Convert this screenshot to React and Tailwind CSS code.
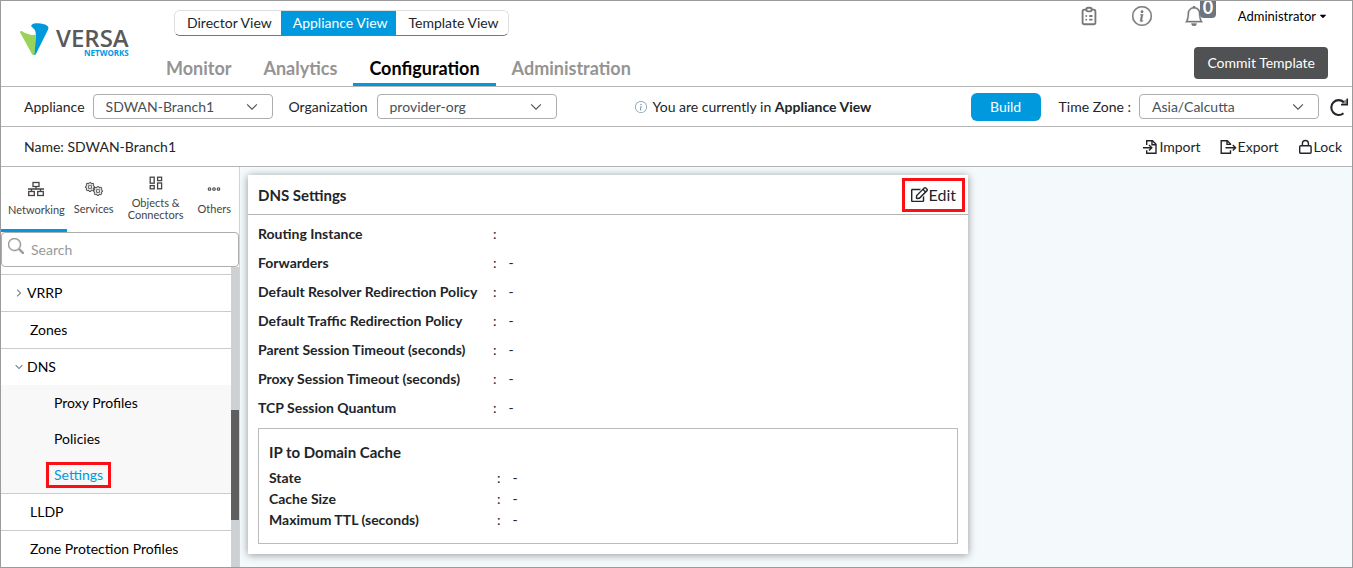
import { useState } from 'react';
import { BsBell, BsInfoCircle, BsGear, BsSearch, BsChevronDown, BsChevronRight } from 'react-icons/bs';
import { FaRegEdit, FaCaretDown } from 'react-icons/fa';
import { TbClipboardList } from 'react-icons/tb';

const views = ['Director View', 'Appliance View', 'Template View'];
const pages = ['Monitor', 'Analytics', 'Configuration', 'Administration'];

const settings = [
  { label: 'Routing Instance', value: '' },
  { label: 'Forwarders', value: '-' },
  { label: 'Default Resolver Redirection Policy', value: '-' },
  { label: 'Default Traffic Redirection Policy', value: '-' },
  { label: 'Parent Session Timeout (seconds)', value: '-' },
  { label: 'Proxy Session Timeout (seconds)', value: '-' },
  { label: 'TCP Session Quantum', value: '-' },
];

const cache = [
  { label: 'State', value: '-' },
  { label: 'Cache Size', value: '-' },
  { label: 'Maximum TTL (seconds)', value: '-' },
];

function NetworkIcon() {
  return (
    <svg width="18" height="16" viewBox="0 0 18 16" fill="none" stroke="currentColor" strokeWidth="1.3">
      <rect x="6" y="1.5" width="6" height="4" />
      <path d="M9 5.5V8M1 8h16M4.5 8v2.5M13.5 8v2.5" />
      <rect x="1.7" y="10.5" width="5.6" height="4" />
      <rect x="10.7" y="10.5" width="5.6" height="4" />
    </svg>
  );
}

function GearsIcon() {
  return (
    <span className="flex">
      <BsGear size={10} className="-mr-0.5 stroke-[0.5]" />
      <BsGear size={10} className="mt-1 stroke-[0.5]" />
    </span>
  );
}

function BlocksIcon() {
  return (
    <svg width="14" height="14" viewBox="0 0 14 14" fill="none" stroke="currentColor" strokeWidth="1.3">
      <rect x="1.2" y="1.2" width="4" height="6" />
      <rect x="8.6" y="1.2" width="4" height="3.4" />
      <rect x="1.2" y="9.6" width="4" height="3.2" />
      <rect x="8.6" y="7" width="4" height="5.8" />
    </svg>
  );
}

function DotsIcon() {
  return (
    <svg width="14" height="14" viewBox="0 0 14 14" fill="none" stroke="currentColor" strokeWidth="1.1">
      <circle cx="2.5" cy="7" r="1.3" />
      <circle cx="7" cy="7" r="1.3" />
      <circle cx="11.5" cy="7" r="1.3" />
    </svg>
  );
}

function ReloadIcon() {
  return (
    <svg width="20" height="20" viewBox="0 0 20 20" fill="none" stroke="currentColor" strokeWidth="2.1">
      <path d="M14.500 16.200A7.400 7.400 0 1 1 14.800 5.200" />
      <path d="M18.300 1.500v6.300h-6.300" strokeWidth="1.500" />
      <path d="M12 7.500l2-3.500L18.500 2v5.500z" fill="currentColor" fillOpacity="0.5" stroke="none" />
    </svg>
  );
}

function ImportIcon() {
  return (
    <svg width="16" height="16" viewBox="0 0 16 16" fill="none" stroke="currentColor" strokeWidth="1.4">
      <path d="M4.700 6V1.700h5.800l3.500 3.500v9.100H4.700v-3" />
      <path d="M10 1.700v4h4" />
      <path d="M1 8.700h8.500M7 5.900l2.800 2.800L7 11.500" />
    </svg>
  );
}

function ExportIcon() {
  return (
    <svg width="17" height="16" viewBox="0 0 17 16" fill="none" stroke="currentColor" strokeWidth="1.4">
      <path d="M10.500 6V5L7.300 1.700H1.200v12.600h9.300v-3" />
      <path d="M7 1.700v3.700h3.500" />
      <path d="M5.500 8.700h10M12.800 5.900l2.800 2.800-2.800 2.800" />
    </svg>
  );
}

function LockIcon() {
  return (
    <svg width="15" height="16" viewBox="0 0 15 16" fill="none" stroke="currentColor" strokeWidth="1.4">
      <rect x="1.700" y="6.700" width="11.400" height="7.600" rx="1" />
      <path d="M4.400 6.700V4.500a3 3 0 0 1 6 0v2.200" />
    </svg>
  );
}

const groups = [
  { label: 'Networking', icon: <NetworkIcon /> },
  { label: 'Services', icon: <GearsIcon /> },
  { label: 'Objects & Connectors', icon: <BlocksIcon /> },
  { label: 'Others', icon: <DotsIcon /> },
];

function Logo() {
  return (
    <a href="#" aria-label="Versa Networks" className="flex gap-[7px]">
      <svg width="29" height="33" viewBox="0 0 29 33" className="shrink-0">
        <path d="M.2 9.800C-.2 8.500.8 7.700 2 8.300c4 2.500 8.500 4.200 13.500 3.500L15 31.500c-.8 1-2.200 1-2.900-.2z" fill="#9bd35a" />
        <path d="M11.800 1.800C14-.4 24-.2 27.500 3c1.200 1.200 1 2.500.5 3.700L16.200 30.500c-.4.900-.9 1.500-1.700 1.700L15.800 12c.2-4.500-1.500-6-3.700-7.700-1-.8-1.100-1.700-.3-2.500z" fill="#0099de" />
      </svg>
      <span className="flex flex-col items-end pt-1 font-['Open_Sans',sans-serif]">
        <span className="text-2xl font-semibold leading-[22px] text-[#58595b]">VERSA</span>
        <span className="text-[8px] font-bold leading-2 text-[#0099de]">NETWORKS</span>
      </span>
    </a>
  );
}

function Select({ id, value }) {
  return (
    <div className="relative">
      <select
        id={id}
        defaultValue={value}
        className="block h-[25px] w-[180px] appearance-none rounded border border-[#adadad] bg-white pl-3 pr-8 text-sm leading-5 text-[#495057]"
      >
        <option>{value}</option>
      </select>
      <BsChevronDown size={12} className="pointer-events-none absolute right-[15px] top-[7px] stroke-[0.5] text-[#343a40]" />
    </div>
  );
}

function Action({ icon, children }) {
  return (
    <button type="button" className="flex items-center gap-px">
      {icon}
      {children}
    </button>
  );
}

function Fields({ rows, rowClass }) {
  return (
    <dl>
      {rows.map((row) => (
        <div key={row.label} className={`flex items-center ${rowClass}`}>
          <dt className="font-bold">{row.label}</dt>
          <dd className="flex gap-3">
            <span>:</span>
            <span>{row.value}</span>
          </dd>
        </div>
      ))}
    </dl>
  );
}

function MenuItem({ children, open, parent }) {
  const Chevron = open ? BsChevronDown : BsChevronRight;
  return (
    <li className="border-t border-[#c9cbcd]">
      <a href="#" className={`flex h-9 items-center ${parent ? 'gap-1 pl-3.5' : 'pl-[29px]'}`}>
        {parent && <Chevron size={8} className="stroke-1 text-[#5b7083]" />}
        {children}
      </a>
    </li>
  );
}

export default function App() {
  const [view, setView] = useState('Appliance View');
  const [query, setQuery] = useState('');

  return (
    <div className="flex h-screen flex-col overflow-hidden border border-[#9b9b9b] bg-white font-[Lato,sans-serif] text-sm text-[#212529]">
      <header className="flex shrink-0 justify-between border-b border-[#b5b5b5] pr-6">
        <div className="flex">
          <div className="w-[149px] pl-[19px] pt-[22px]">
            <Logo />
          </div>
          <div className="flex flex-col pt-[9px]">
            <div className="ml-6 flex self-start overflow-hidden rounded-md border border-b-[#777] border-[#ddd]">
              {views.map((name) => (
                <button
                  key={name}
                  type="button"
                  onClick={() => setView(name)}
                  className={`h-6 pl-3 pr-[9px] leading-6 ${name === view ? 'bg-[#0099de] text-white' : 'bg-white'}`}
                >
                  {name}
                </button>
              ))}
            </div>
            <nav className="mt-3 flex">
              {pages.map((name) => (
                <a
                  key={name}
                  href="#"
                  className={`h-[38px] border-b-3 px-4 pt-1.5 text-lg font-bold leading-7 ${
                    name === 'Configuration' ? 'border-[#0099de] text-black' : 'border-transparent text-[#949494]'
                  }`}
                >
                  {name}
                </a>
              ))}
            </nav>
          </div>
        </div>

        <div className="flex flex-col items-end">
          <div className="flex h-[30px] items-center text-[#777]">
            <button type="button" aria-label="Tasks">
              <TbClipboardList size={22} />
            </button>
            <button type="button" aria-label="Information" className="ml-8">
              <BsInfoCircle size={20} className="stroke-[0.3]" />
            </button>
            <button type="button" aria-label="Notifications" className="relative ml-8 mr-6">
              <BsBell size={20} className="stroke-[0.3]" />
              <span className="absolute -top-[5px] left-4 h-[17px] rounded-b bg-[#6c757d] px-[3px] text-lg font-bold leading-3 text-white">0</span>
            </button>
            <button type="button" className="flex items-center gap-0.5 pl-2.5 text-[13px] text-black">
              Administrator
              <FaCaretDown size={10} />
            </button>
          </div>
          <button type="button" className="mt-4 h-8 rounded bg-[#505152] px-[13px] text-white">
            Commit Template
          </button>
        </div>
      </header>

      <div className="flex h-10 shrink-0 items-center border-b border-[#b5b5b5] pl-[23px] pr-[3px]">
        <label htmlFor="appliance" className="pr-2">Appliance</label>
        <Select id="appliance" value="SDWAN-Branch1" />
        <label htmlFor="organization" className="pl-4 pr-[9px]">Organization</label>
        <Select id="organization" value="provider-org" />
        <p className="flex flex-1 items-center gap-1.5 pl-[78px]">
          <BsInfoCircle size={12} className="text-[#7c9aab]" />
          <span>You are currently in <b>Appliance View</b></span>
        </p>
        <button type="button" className="h-7 w-[70px] rounded-md bg-[#0099de] text-white">Build</button>
        <label htmlFor="timezone" className="pl-[18px] pr-2">Time Zone :</label>
        <Select id="timezone" value="Asia/Calcutta" />
        <button type="button" aria-label="Reload" className="ml-2.5">
          <ReloadIcon />
        </button>
      </div>

      <div className="flex h-10 shrink-0 items-center justify-between border-b border-[#b5b5b5] pl-[23px] pr-2.5">
        <span>Name: SDWAN-Branch1</span>
        <div className="flex gap-[19px]">
          <Action icon={<ImportIcon />}>Import</Action>
          <Action icon={<ExportIcon />}>Export</Action>
          <Action icon={<LockIcon />}>Lock</Action>
        </div>
      </div>

      <div className="flex min-h-0 flex-1">
        <aside className="flex w-[239px] shrink-0 flex-col border-r border-[#d0d5d8]">
          <div className="flex shrink-0 justify-between pr-1.5 text-[11px] leading-3 text-[#444]">
            {groups.map((group, i) => (
              <button
                key={group.label}
                type="button"
                className={`flex h-[65px] flex-col items-center justify-center gap-[7px] border-b-3 pl-[7px] pr-0.5 ${
                  i === 0 ? 'border-[#0099de]' : 'border-transparent'
                }`}
              >
                {group.icon}
                {group.label}
              </button>
            ))}
          </div>
          <div className="relative shrink-0">
            <BsSearch size={16} className="absolute left-[7px] top-1.5 stroke-[0.5] text-[#999]" />
            <input
              type="search"
              aria-label="Search"
              placeholder="Search"
              value={query}
              onChange={(e) => setQuery(e.target.value)}
              className="block h-[35px] w-full rounded border border-[#adadad] pl-[29px] text-sm placeholder-[#999]"
            />
          </div>
          <div className="flex min-h-0 flex-1">
            <ul className="flex-1 overflow-hidden pt-[7px] text-black">
              <MenuItem parent>VRRP</MenuItem>
              <MenuItem>Zones</MenuItem>
              <MenuItem parent open>DNS</MenuItem>
              <li className="bg-[#f8f8f8]">
                <a href="#" className="flex h-9 items-center pl-[53px]">Proxy Profiles</a>
                <a href="#" className="flex h-9 items-center pl-[53px]">Policies</a>
                <div className="flex h-9 items-center pl-[45px]">
                  <a href="#" className="border-3 border-[#fa0f14] px-[5px] leading-5 text-[#0099de]">Settings</a>
                </div>
              </li>
              <MenuItem>LLDP</MenuItem>
              <MenuItem>Zone Protection Profiles</MenuItem>
            </ul>
            {/* scroll bar */}
            <div className="flex w-2 flex-col bg-[#cdd1d4]">
              <div className="flex-[143]" />
              <div className="flex-[110] bg-[#5f5f5f]" />
              <div className="flex-[47]" />
            </div>
          </div>
        </aside>

        <main className="flex-1 bg-[#f4f9fc] p-2">
          <section className="w-full max-w-[720px] bg-white shadow-[0_1px_8px_rgba(0,0,0,0.4)]">
            <div className="flex h-10 items-center justify-between border-b border-[#b5b5b5] pl-2.5 pr-[3px]">
              <h2 className="pt-0.5 text-[15px] font-bold">DNS Settings</h2>
              <button type="button" className="flex h-[34px] items-center gap-px border-3 border-[#fa0f14] px-1.5 text-base">
                <FaRegEdit size={17} />
                Edit
              </button>
            </div>
            <div className="px-2.5 pb-2.5 pt-1">
              <Fields rows={settings} rowClass="h-[29px] [&>dt]:w-[235px]" />
              <div className="mt-1.5 border border-[#bbb] px-2.5 py-[13px]">
                <h3 className="mb-1 text-[15px] font-bold leading-[21px]">IP to Domain Cache</h3>
                <Fields rows={cache} rowClass="h-[21px] [&>dt]:w-[228px]" />
              </div>
            </div>
          </section>
        </main>
      </div>
    </div>
  );
}
